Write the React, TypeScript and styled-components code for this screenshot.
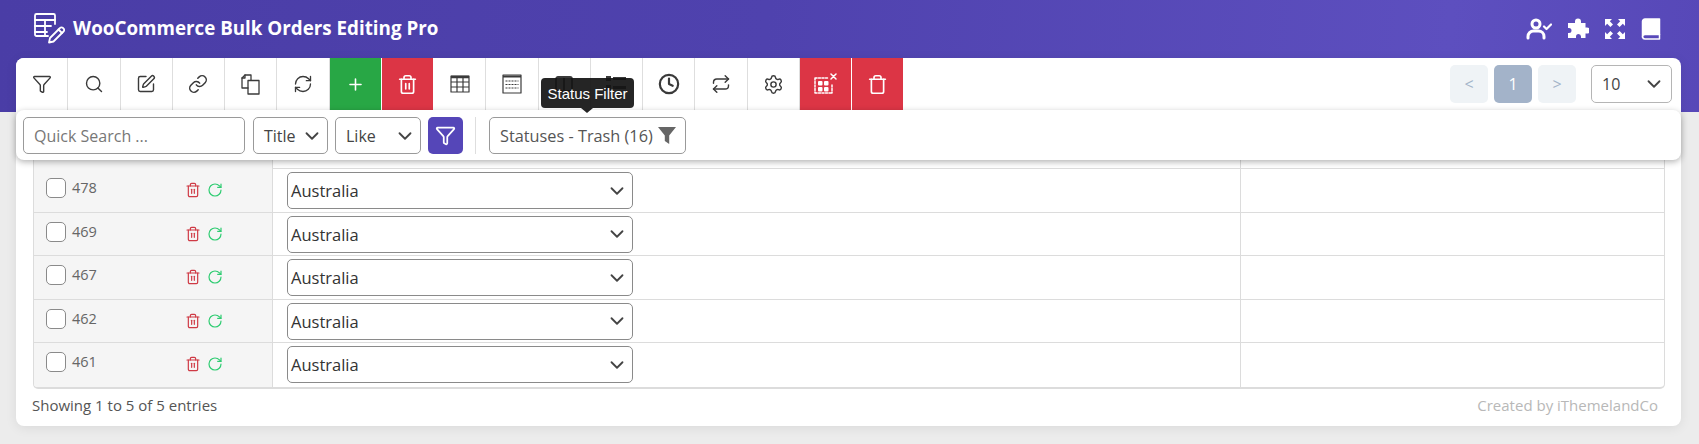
import { FC, ReactNode } from 'react';
import styled, { createGlobalStyle } from 'styled-components';
import {
  ChevronDown,
  Clock,
  Funnel,
  Link,
  Plus,
  RefreshCw,
  Repeat,
  RotateCw,
  Search,
  Settings,
  SquarePen,
  Trash,
  Trash2,
} from 'lucide-react';

const GlobalStyle = createGlobalStyle`
  html, body {
    margin: 0;
    padding: 0;
    background: #ececec;
    font-family: 'Open Sans', 'Liberation Sans', sans-serif;
  }
  * {
    box-sizing: border-box;
  }
`;

const Page = styled.div`
  height: 444px;
  overflow: hidden;
`;

const Header = styled.header`
  height: 112px;
  padding: 11px 38px 0 33px;
  display: flex;
  justify-content: space-between;
  align-items: flex-start;
  background: linear-gradient(95deg, #4a3da6 0%, #4f42ae 45%, #5d4fbf 85%, #5748b8 100%);
`;

const Brand = styled.div`
  display: flex;
  align-items: center;
  gap: 8px;
  color: #fff;
  font-size: 18.8px;
  font-weight: 700;
  line-height: 34px;
`;

const HeaderIcons = styled.div`
  display: flex;
  align-items: center;
  gap: 15px;
  padding: 7px 0 0;
  color: #fff;
`;

const Card = styled.main`
  position: relative;
  margin: -54px 18px 0 16px;
  height: 368px;
  border-radius: 8px;
  background: #fff;
  box-shadow: 0 2px 12px rgba(0, 0, 0, 0.08);
`;

const Toolbar = styled.div`
  height: 52px;
  display: flex;
  justify-content: space-between;
  border-radius: 8px 8px 0 0;
  overflow: hidden;
`;

const ToolGroup = styled.div`
  display: flex;
`;

const ToolButton = styled.div<{ $tone?: 'green' | 'red' }>`
  width: 52.25px;
  display: flex;
  align-items: center;
  justify-content: center;
  border-right: 1px solid ${({ $tone }) => ($tone ? '#fff' : '#dedede')};
  background: ${({ $tone }) =>
    $tone === 'green' ? '#28a745' : $tone === 'red' ? '#dc3545' : '#fff'};
  color: ${({ $tone }) => ($tone ? '#fff' : '#3a3a3a')};
`;

const PagerGroup = styled.div`
  display: flex;
  align-items: flex-start;
  padding: 7px 9px 0 0;
`;

const PageButton = styled.div<{ $active?: boolean }>`
  width: 38px;
  height: 38px;
  margin-right: 6px;
  display: flex;
  align-items: center;
  justify-content: center;
  border-radius: 5px;
  font-size: 16px;
  background: ${({ $active }) => ($active ? '#a3b3c9' : '#eff3f6')};
  color: ${({ $active }) => ($active ? '#fff' : '#a3b3c9')};
`;

const Field = styled.div<{ $width: number; $height?: number }>`
  width: ${({ $width }) => $width}px;
  height: ${({ $height }) => $height || 37}px;
  flex: none;
  padding: 0 4px 0 10px;
  display: flex;
  align-items: center;
  justify-content: space-between;
  border: 1px solid #9a9a9a;
  border-radius: 5px;
  background: #fff;
  color: #444;
  font-size: 16px;
  white-space: nowrap;
  svg {
    flex: none;
    color: #444;
  }
`;

const PageSize = styled(Field)`
  margin-left: 9px;
  padding-right: 6px;
  height: 38px;
  border-color: #b5b5b5;
`;

const FilterPanel = styled.div`
  position: relative;
  z-index: 2;
  height: 50px;
  padding: 7px 0 0 7px;
  display: flex;
  align-items: flex-start;
  border-radius: 8px;
  background: #fff;
  box-shadow: 0 2px 6px rgba(0, 0, 0, 0.3);
`;

const QuickSearch = styled(Field)`
  margin-right: 8px;
  color: #777;
`;

const Operator = styled(Field)`
  margin-right: 7px;
`;

const FilterButton = styled.div`
  width: 35px;
  height: 37px;
  margin-right: 12px;
  display: flex;
  align-items: center;
  justify-content: center;
  border-radius: 5px;
  background: #5546b8;
  color: #fff;
`;

const Divider = styled.div`
  width: 1px;
  height: 37px;
  margin-right: 13px;
  background: #dedede;
`;

const StatusField = styled(Field)`
  padding-right: 9px;
  color: #555;
  font-size: 16.3px;
`;

const Tooltip = styled.div`
  position: absolute;
  z-index: 3;
  left: 525px;
  top: 20px;
  width: 93px;
  height: 30px;
  display: flex;
  align-items: center;
  justify-content: center;
  border-radius: 4px;
  background: rgba(20, 20, 20, 0.93);
  color: #fff;
  font-family: 'Liberation Sans', Arial, sans-serif;
  font-size: 15px;
  &::after {
    content: '';
    position: absolute;
    left: 40px;
    bottom: -5px;
    border-width: 5px 6px 0;
    border-style: solid;
    border-color: rgba(20, 20, 20, 0.93) transparent transparent;
  }
`;

const Table = styled.div`
  margin: 0 16px 0 17px;
  border: 1px solid #dcdcdc;
  border-top: 0;
  border-bottom-width: 2px;
  border-radius: 0 0 5px 5px;
  overflow: hidden;
`;

const Row = styled.div<{ $spacer?: boolean }>`
  height: ${({ $spacer }) => ($spacer ? '9px' : '43.5px')};
  display: grid;
  grid-template-columns: 239px 968px 1fr;
  border-bottom: 1px solid #dcdcdc;
  &:last-child {
    border-bottom: 0;
  }
`;

const IdCell = styled.div`
  position: relative;
  padding: 9px 0 0 12px;
  display: flex;
  align-items: flex-start;
  border-right: 1px solid #dcdcdc;
  background: #f5f5f5;
  color: #666;
  font-size: 14.5px;
  line-height: 20px;
`;

const CheckBox = styled.span`
  width: 20px;
  height: 20px;
  margin-right: 6px;
  border: 1px solid #8a8a8a;
  border-radius: 5px;
  background: #fff;
`;

const RowActions = styled.span`
  position: absolute;
  left: 151px;
  top: 13px;
  display: flex;
  gap: 6px;
`;

const SelectCell = styled.div`
  padding: 3px 0 0 14px;
  border-right: 1px solid #dcdcdc;
`;

const CountrySelect = styled(Field)`
  padding-left: 3px;
  border-color: #8a8a8a;
  color: #333;
  font-size: 16.5px;
`;

const EmptyCell = styled.div``;

const Footer = styled.div`
  margin: 6px 23px 0 16px;
  display: flex;
  justify-content: space-between;
  font-size: 15px;
  line-height: 20px;
  color: #555;
`;

const Credit = styled.span`
  color: #b8b8b8;
`;

const svgProps = {
  fill: 'none',
  stroke: 'currentColor',
  strokeLinecap: 'round' as const,
  strokeLinejoin: 'round' as const,
};

const LogoIcon: FC = () => (
  <svg width="32" height="32" viewBox="0 0 32 32" {...svgProps} strokeWidth="1.8">
    <path d="M15 24H3.500A1.500 1.500 0 0 1 2 22.500V3.500A1.500 1.500 0 0 1 3.500 2h17A1.500 1.500 0 0 1 22 3.500V12" />
    <path d="M2 8h20M2 14h16M2 20h12M12 8v16" />
    <path d="M17 26l-1 4.500 4.500-1L30.500 19.500a2 2 0 0 0 0-3l-.5-.5a2 2 0 0 0-3 0Z" />
    <path d="M25.500 17.500l3.500 3.500" />
  </svg>
);

const UserCheckIcon: FC = () => (
  <svg width="26" height="22" viewBox="0 0 26 22" {...svgProps} strokeWidth="3">
    <circle cx="10" cy="6" r="4" />
    <path d="M2 20v-1.500A5.500 5.500 0 0 1 7.500 13h5a5.500 5.500 0 0 1 5.500 5.500V20" />
    <path d="M18 8.500l2.500 2.500L25 6.500" strokeWidth="2.200" />
  </svg>
);

const PuzzleIcon: FC = () => (
  <svg width="22" height="22" viewBox="0 0 22 22" fill="currentColor">
    <path d="M8 3.500a3 3 0 0 1 6 0V5h4.500v4.500H20a3 3 0 0 1 0 6h-1.500V20H14v-1.500a2.500 2.500 0 0 0-5 0V20H1v-5h1a2.500 2.500 0 0 0 0-5H1V5h7Z" />
  </svg>
);

const ExpandIcon: FC = () => (
  <svg width="22" height="22" viewBox="0 0 22 22" fill="currentColor">
    <path d="M1 1h7L5.800 3.200 9 6.400 6.400 9 3.200 5.800 1 8ZM21 1v7l-2.200-2.200L15.600 9 13 6.400l3.200-3.200L14 1ZM1 21v-7l2.200 2.200L6.400 13 9 15.600l-3.200 3.200L8 21ZM21 21h-7l2.200-2.200L13 15.600l2.600-2.600 3.200 3.200L21 14Z" />
  </svg>
);

const BookIcon: FC = () => (
  <svg width="20" height="22" viewBox="0 0 20 22" {...svgProps} strokeWidth="1.5">
    <path d="M4 1h14.500v15.500H4A2.500 2.500 0 0 0 1.500 19V3.500A2.500 2.500 0 0 1 4 1Z" fill="currentColor" />
    <path d="M1.500 19A2.500 2.500 0 0 0 4 21h14.500v-4.500" />
  </svg>
);

const CopyIcon: FC = () => (
  <svg width="21" height="21" viewBox="0 0 21 21" {...svgProps} strokeWidth="1.300">
    <path d="M8 14H2V4l3-3h6v5" />
    <path d="M2 4h3V1" />
    <path d="M8 6.500h11V20H8Z" />
  </svg>
);

const TableIcon: FC = () => (
  <svg width="20" height="18" viewBox="0 0 20 18" {...svgProps} strokeWidth="1.200" strokeLinecap="butt">
    <rect x="1" y="1" width="18" height="16" />
    <path d="M1 2h18" strokeWidth="2.500" />
    <path d="M1 7h18M1 12h18M7 2v15M13 2v15" />
  </svg>
);

const DashedTableIcon: FC = () => (
  <svg width="20" height="20" viewBox="0 0 20 20" {...svgProps} strokeWidth="1.200" strokeLinecap="butt">
    <rect x="1" y="1" width="18" height="18" />
    <path d="M1 2.500h18" strokeWidth="2" />
    <path d="M3.500 7h13M3.500 10.500h13M3.500 14h13" strokeDasharray="2 1" />
  </svg>
);

const ColumnsIcon: FC = () => (
  <svg width="18" height="16" viewBox="0 0 18 16" {...svgProps} strokeWidth="1.800">
    <rect x="1" y="1" width="16" height="14" rx="2" />
    <path d="M9 1v14" />
  </svg>
);

const ListIcon: FC = () => (
  <svg width="22" height="16" viewBox="0 0 22 16" fill="currentColor">
    <rect x="1" y="0" width="5" height="5" />
    <rect x="8" y="1" width="13" height="3" />
    <rect x="1" y="9" width="5" height="5" />
    <rect x="8" y="10" width="13" height="3" />
  </svg>
);

const ClearGridIcon: FC = () => (
  <svg width="24" height="24" viewBox="0 0 24 24" {...svgProps} strokeWidth="1.500">
    <path d="M2 6h13M2 21h17M2 6v15M19 13v8" strokeDasharray="2 1.500" />
    <g fill="currentColor" stroke="none">
      <rect x="5" y="9" width="4.500" height="4.500" rx="1" />
      <rect x="11" y="9" width="4.500" height="4.500" rx="1" />
      <rect x="5" y="15" width="4.500" height="4.500" rx="1" />
      <rect x="11" y="15" width="4.500" height="4.500" rx="1" />
    </g>
    <path d="M18 2l5 5M23 2l-5 5" />
  </svg>
);

const SolidFunnel: FC = () => (
  <svg width="18" height="17" viewBox="0 0 18 17" fill="#666">
    <path d="M0 0h18l-6.800 8.500V17l-4.400-3V8.500Z" />
  </svg>
);

const Chevron: FC = () => <ChevronDown size={22} strokeWidth={2} />;

const leftTools: { key: string; icon: ReactNode; tone?: 'green' | 'red' }[] = [
  { key: 'filter', icon: <Funnel size={20} strokeWidth={1.7} /> },
  { key: 'search', icon: <Search size={20} strokeWidth={1.7} /> },
  { key: 'edit', icon: <SquarePen size={20} strokeWidth={1.7} /> },
  { key: 'link', icon: <Link size={20} strokeWidth={1.8} /> },
  { key: 'copy', icon: <CopyIcon /> },
  { key: 'refresh', icon: <RefreshCw size={20} strokeWidth={1.6} /> },
  { key: 'add', icon: <Plus size={19} strokeWidth={2} />, tone: 'green' },
  { key: 'remove', icon: <Trash2 size={21} strokeWidth={1.9} />, tone: 'red' },
  { key: 'table', icon: <TableIcon /> },
  { key: 'dashed', icon: <DashedTableIcon /> },
  { key: 'columns', icon: <ColumnsIcon /> },
  { key: 'list', icon: <ListIcon /> },
  { key: 'clock', icon: <Clock size={22} strokeWidth={2.4} /> },
  { key: 'repeat', icon: <Repeat size={20} strokeWidth={1.7} /> },
  { key: 'settings', icon: <Settings size={21} strokeWidth={1.6} /> },
  { key: 'clear', icon: <ClearGridIcon />, tone: 'red' },
  { key: 'trash', icon: <Trash size={21} strokeWidth={1.9} />, tone: 'red' },
];

const orderIds = [478, 469, 467, 462, 461];

const App: FC = () => (
  <Page>
    <GlobalStyle />
    <Header>
      <Brand>
        <LogoIcon />
        WooCommerce Bulk Orders Editing Pro
      </Brand>
      <HeaderIcons>
        <UserCheckIcon />
        <PuzzleIcon />
        <ExpandIcon />
        <BookIcon />
      </HeaderIcons>
    </Header>
    <Card>
      <Toolbar>
        <ToolGroup>
          {leftTools.map(({ key, icon, tone }) => (
            <ToolButton key={key} $tone={tone}>
              {icon}
            </ToolButton>
          ))}
        </ToolGroup>
        <PagerGroup>
          <PageButton>&lt;</PageButton>
          <PageButton $active>1</PageButton>
          <PageButton>&gt;</PageButton>
          <PageSize $width={81}>
            10
            <Chevron />
          </PageSize>
        </PagerGroup>
      </Toolbar>
      <Tooltip>Status Filter</Tooltip>
      <FilterPanel>
        <QuickSearch $width={222}>Quick Search ...</QuickSearch>
        <Operator $width={75}>
          Title
          <Chevron />
        </Operator>
        <Operator $width={86}>
          Like
          <Chevron />
        </Operator>
        <FilterButton>
          <Funnel size={21} strokeWidth={2} />
        </FilterButton>
        <Divider />
        <StatusField $width={197}>
          Statuses - Trash (16)
          <SolidFunnel />
        </StatusField>
      </FilterPanel>
      <Table>
        <Row $spacer>
          <IdCell />
          <SelectCell />
          <EmptyCell />
        </Row>
        {orderIds.map((id) => (
          <Row key={id}>
            <IdCell>
              <CheckBox />
              {id}
              <RowActions>
                <Trash2 size={16} color="#cf3a45" strokeWidth={1.8} />
                <RotateCw size={16} color="#2ecc71" strokeWidth={1.8} />
              </RowActions>
            </IdCell>
            <SelectCell>
              <CountrySelect $width={346}>
                Australia
                <Chevron />
              </CountrySelect>
            </SelectCell>
            <EmptyCell />
          </Row>
        ))}
      </Table>
      <Footer>
        <span>Showing 1 to 5 of 5 entries</span>
        <Credit>Created by iThemelandCo</Credit>
      </Footer>
    </Card>
  </Page>
);

export default App;
